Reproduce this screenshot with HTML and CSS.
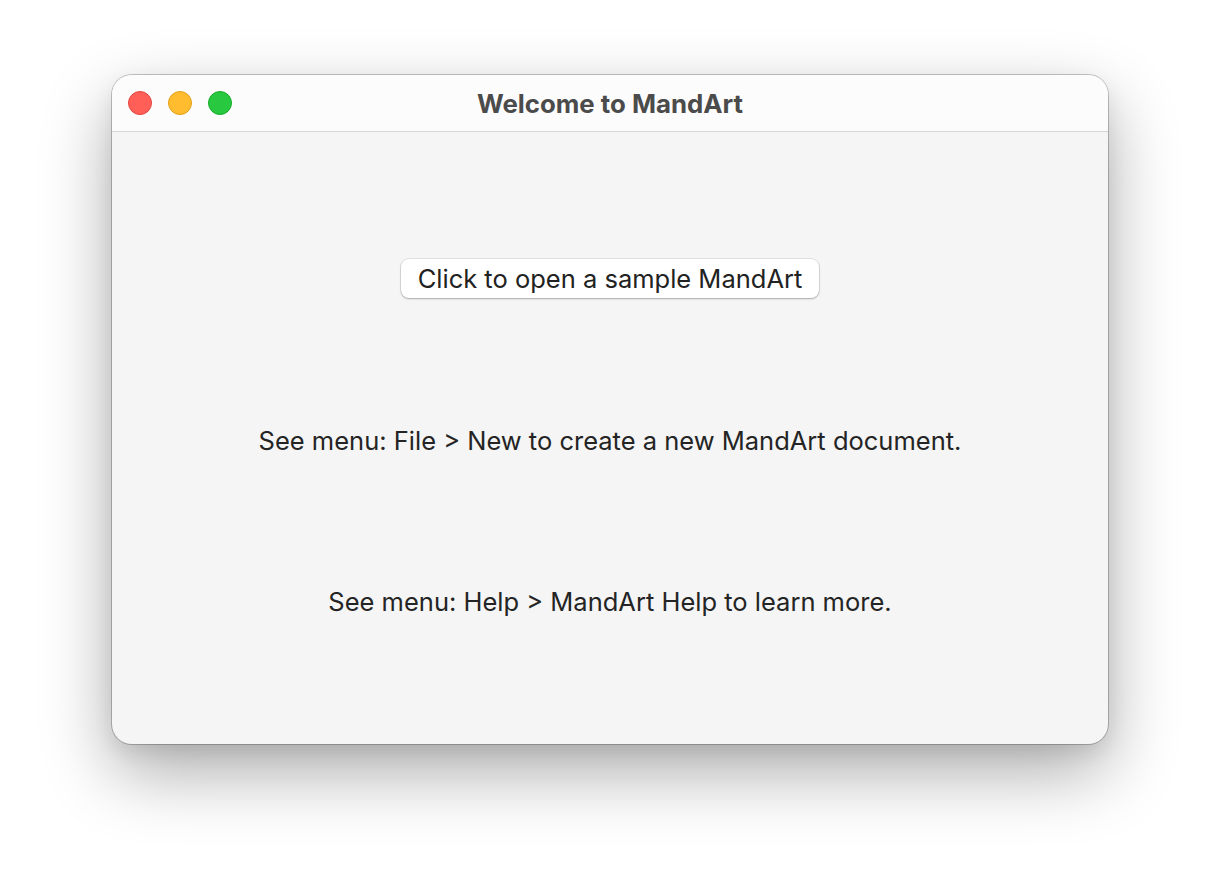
FILE: index.html
```html
<!DOCTYPE html>
<html>
<head>
<meta charset="utf-8">
<link rel="stylesheet" href="styles.css">
</head>
<body>
<div class="window">
  <div class="titlebar">
    <div class="lights">
      <span class="light red"></span>
      <span class="light yellow"></span>
      <span class="light green"></span>
    </div>
    <div class="title">Welcome to MandArt</div>
  </div>
  <div class="content">
    <button class="btn">Click to open a sample MandArt</button>
    <p class="line first">See menu: File &gt; New to create a new MandArt document.</p>
    <p class="line second">See menu: Help &gt; MandArt Help to learn more.</p>
  </div>
</div>
</body>
</html>
```
FILE: styles.css
```css
html, body {
  margin: 0;
  padding: 0;
  background: #ffffff;
}
body {
  width: 1220px;
  height: 892px;
  overflow: hidden;
  font-family: Inter, "Noto Sans", sans-serif;
}
.window {
  box-sizing: border-box;
  margin: 75px 0 0 112px;
  width: 996px;
  height: 669px;
  border-radius: 20px;
  background: #f5f5f5;
  box-shadow: 0 0 0 1px rgba(0,0,0,0.22), 0 28px 70px rgba(0,0,0,0.33), 0 8px 20px rgba(0,0,0,0.08);
  overflow: hidden;
  display: flex;
  flex-direction: column;
}
.titlebar {
  position: relative;
  height: 56px;
  background: #fcfcfc;
  border-bottom: 1px solid #d6d6d6;
  display: flex;
  align-items: center;
  justify-content: center;
}
.lights {
  position: absolute;
  left: 16px;
  top: 16px;
  display: flex;
  gap: 16px;
}
.light {
  width: 24px;
  height: 24px;
  border-radius: 50%;
  box-sizing: border-box;
}
.red { background: #ff5f57; border: 1px solid #e2463f; }
.yellow { background: #febc2e; border: 1px solid #e1a116; }
.green { background: #28c840; border: 1px solid #14ae2a; }
.title {
  font-size: 25.8px;
  font-weight: 700;
  color: #4b4b4b;
  margin-top: 0;
}
.content {
  flex: 1;
  display: flex;
  flex-direction: column;
  align-items: center;
  padding-top: 127px;
}
.btn {
  font-family: Inter, "Noto Sans", sans-serif;
  font-size: 25.5px;
  color: #222222;
  background: #ffffff;
  border: none;
  border-radius: 8px;
  height: 39px;
  padding: 0 17px;
  box-shadow: 0 0 0 1px rgba(0,0,0,0.08), 0 1px 2px rgba(0,0,0,0.25);
  margin: 0;
}
.line {
  margin: 0;
  font-size: 25.5px;
  line-height: 30px;
  color: #242424;
}
.first { margin-top: 128px; }
.second { margin-top: 131px; }
```
